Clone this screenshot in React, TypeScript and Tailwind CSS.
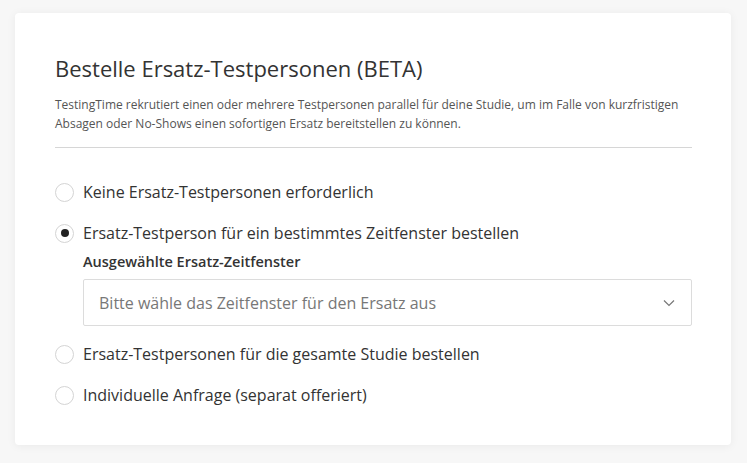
import React from "react";

const options = [
  { label: "Keine Ersatz-Testpersonen erforderlich", checked: false },
  { label: "Ersatz-Testperson für ein bestimmtes Zeitfenster bestellen", checked: true },
  { label: "Ersatz-Testpersonen für die gesamte Studie bestellen", checked: false },
  { label: "Individuelle Anfrage (separat offeriert)", checked: false },
];

function Radio({ checked }: { checked: boolean }) {
  return (
    <span className="flex h-[19px] w-[19px] shrink-0 items-center justify-center rounded-full border border-[#d4d4d4] bg-white">
      {checked && <span className="h-[8px] w-[8px] rounded-full bg-[#222]" />}
    </span>
  );
}

function Option({ label, checked }: { label: string; checked: boolean }) {
  return (
    <label className="flex items-center gap-[9px] text-[16px] leading-[20px] text-[#333]">
      <Radio checked={checked} />
      <span>{label}</span>
    </label>
  );
}

export default function App() {
  return (
    <div className="min-h-[463px] bg-[#f7f7f7] pl-[15px] pr-[16px] pt-[13px]" style={{ fontFamily: "'Open Sans', sans-serif" }}>
      <div className="h-[432px] rounded-[4px] bg-white pl-[40px] pr-[39px] pt-[40px] shadow-[0_1px_10px_rgba(0,0,0,0.06)]">
        <h1 className="text-[22px] leading-[30px] text-[#333]">Bestelle Ersatz-Testpersonen (BETA)</h1>
        <p className="mt-[12px] text-[12px] leading-[19px] text-[#555]">
          TestingTime rekrutiert einen oder mehrere Testpersonen parallel für deine Studie, um im Falle von kurzfristigen
          Absagen oder No-Shows einen sofortigen Ersatz bereitstellen zu können.
        </p>
        <div className="mt-[14px] border-t border-[#d6d6d6]" />

        <div className="mt-[34px] flex flex-col">
          <Option {...options[0]} />
          <div className="mt-[21px]">
            <Option {...options[1]} />
          </div>
          <div className="ml-[28px] mt-[10px]">
            <div className="text-[14.5px] font-semibold leading-[18px] text-[#333]">Ausgewählte Ersatz-Zeitfenster</div>
            <div className="mt-[8px] flex h-[47px] items-center justify-between rounded-[2px] border border-[#dcdcdc] px-[15px]">
              <span className="text-[16px] text-[#777]">Bitte wähle das Zeitfenster für den Ersatz aus</span>
              <svg width="12" height="8" viewBox="0 0 12 8" className="mr-[1px]">
                <path d="M1 1.5l5 5 5-5" fill="none" stroke="#777" strokeWidth="1.2" />
              </svg>
            </div>
          </div>
          <div className="mt-[18px]">
            <Option {...options[2]} />
          </div>
          <div className="mt-[21px]">
            <Option {...options[3]} />
          </div>
        </div>
      </div>
    </div>
  );
}
